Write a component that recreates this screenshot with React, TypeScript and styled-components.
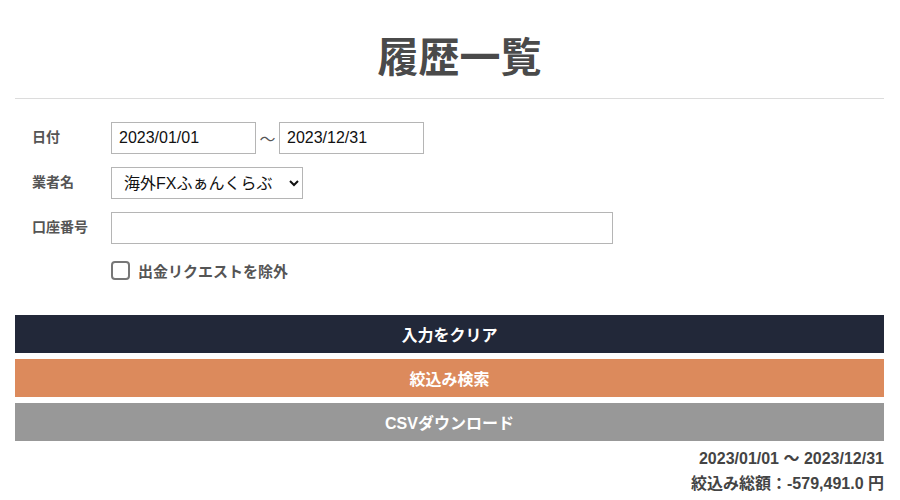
import styled, { createGlobalStyle } from 'styled-components';

const GlobalStyle = createGlobalStyle`
  body {
    margin: 0;
    background: #fff;
    font-family: 'Liberation Sans', 'Noto Sans CJK JP', sans-serif;
    color: #444;
  }
`;

const Page = styled.div`
  padding: 0 16px 0 15px;
`;

const Title = styled.h1`
  margin: 0;
  padding: 34px 0 0 20px;
  height: 64px;
  text-align: center;
  font-size: 41px;
  font-weight: bold;
  line-height: 48px;
  color: #4a4a4a;
  border-bottom: 1px solid #dcdcdc;
  box-sizing: content-box;
`;

const Form = styled.div`
  display: flex;
  flex-flow: column nowrap;
  gap: 13px;
  padding: 23px 0 0 0;
`;

const Row = styled.div`
  display: flex;
  flex-flow: row nowrap;
  align-items: center;
`;

const Label = styled.div`
  width: 79px;
  padding-left: 17px;
  font-size: 14px;
  font-weight: bold;
  color: #555;
  align-self: flex-start;
  line-height: 30px;
`;

const TextInput = styled.input<{ width: number }>`
  box-sizing: border-box;
  width: ${({ width }) => width}px;
  height: 32px;
  padding: 0 7px;
  border: 1px solid #b5b5b5;
  border-radius: 0;
  font-family: 'Liberation Sans', 'Noto Sans CJK JP', sans-serif;
  font-size: 16px;
  color: #111;
  outline: none;
`;

const Tilde = styled.span`
  width: 23px;
  text-align: center;
  font-size: 16px;
  color: #555;
`;

const Select = styled.select`
  box-sizing: border-box;
  width: 192px;
  height: 32px;
  padding: 0 6px 0 8px;
  border: 1px solid #b5b5b5;
  border-radius: 0;
  background: #fff;
  font-family: 'Liberation Sans', 'Noto Sans CJK JP', sans-serif;
  font-size: 16px;
  color: #111;
`;

const CheckRow = styled.label`
  display: flex;
  flex-flow: row nowrap;
  align-items: center;
  gap: 8px;
  margin: 3px 0 0 96px;
  font-size: 15px;
  font-weight: bold;
  color: #555;
`;

const CheckBox = styled.input`
  appearance: none;
  margin: 0;
  width: 19px;
  height: 19px;
  border: 2px solid #777;
  border-radius: 4px;
  background: #fff;
`;

const Buttons = styled.div`
  display: flex;
  flex-flow: column nowrap;
  gap: 6px;
  margin-top: 34px;
`;

const ActionButton = styled.button<{ bg: string }>`
  height: 38px;
  border: none;
  background-color: ${({ bg }) => bg};
  color: #fff;
  font-family: 'Liberation Sans', 'Noto Sans CJK JP', sans-serif;
  font-size: 16px;
  font-weight: bold;
  cursor: pointer;
`;

const Summary = styled.div`
  padding-top: 5px;
  text-align: right;
  font-size: 16px;
  font-weight: bold;
  line-height: 25px;
  color: #444;
`;

export default function App() {
  return (
    <Page>
      <GlobalStyle />
      <Title>履歴一覧</Title>
      <Form>
        <Row>
          <Label>日付</Label>
          <TextInput width={145} defaultValue="2023/01/01" />
          <Tilde>〜</Tilde>
          <TextInput width={145} defaultValue="2023/12/31" />
        </Row>
        <Row>
          <Label>業者名</Label>
          <Select defaultValue="fan">
            <option value="fan">海外FXふぁんくらぶ</option>
          </Select>
        </Row>
        <Row>
          <Label>口座番号</Label>
          <TextInput width={502} />
        </Row>
        <CheckRow>
          <CheckBox type="checkbox" />
          出金リクエストを除外
        </CheckRow>
      </Form>
      <Buttons>
        <ActionButton bg="#222839">入力をクリア</ActionButton>
        <ActionButton bg="#dc8a5c">絞込み検索</ActionButton>
        <ActionButton bg="#989898">CSVダウンロード</ActionButton>
      </Buttons>
      <Summary>
        <div>2023/01/01 〜 2023/12/31</div>
        <div>絞込み総額：-579,491.0 円</div>
      </Summary>
    </Page>
  );
}
